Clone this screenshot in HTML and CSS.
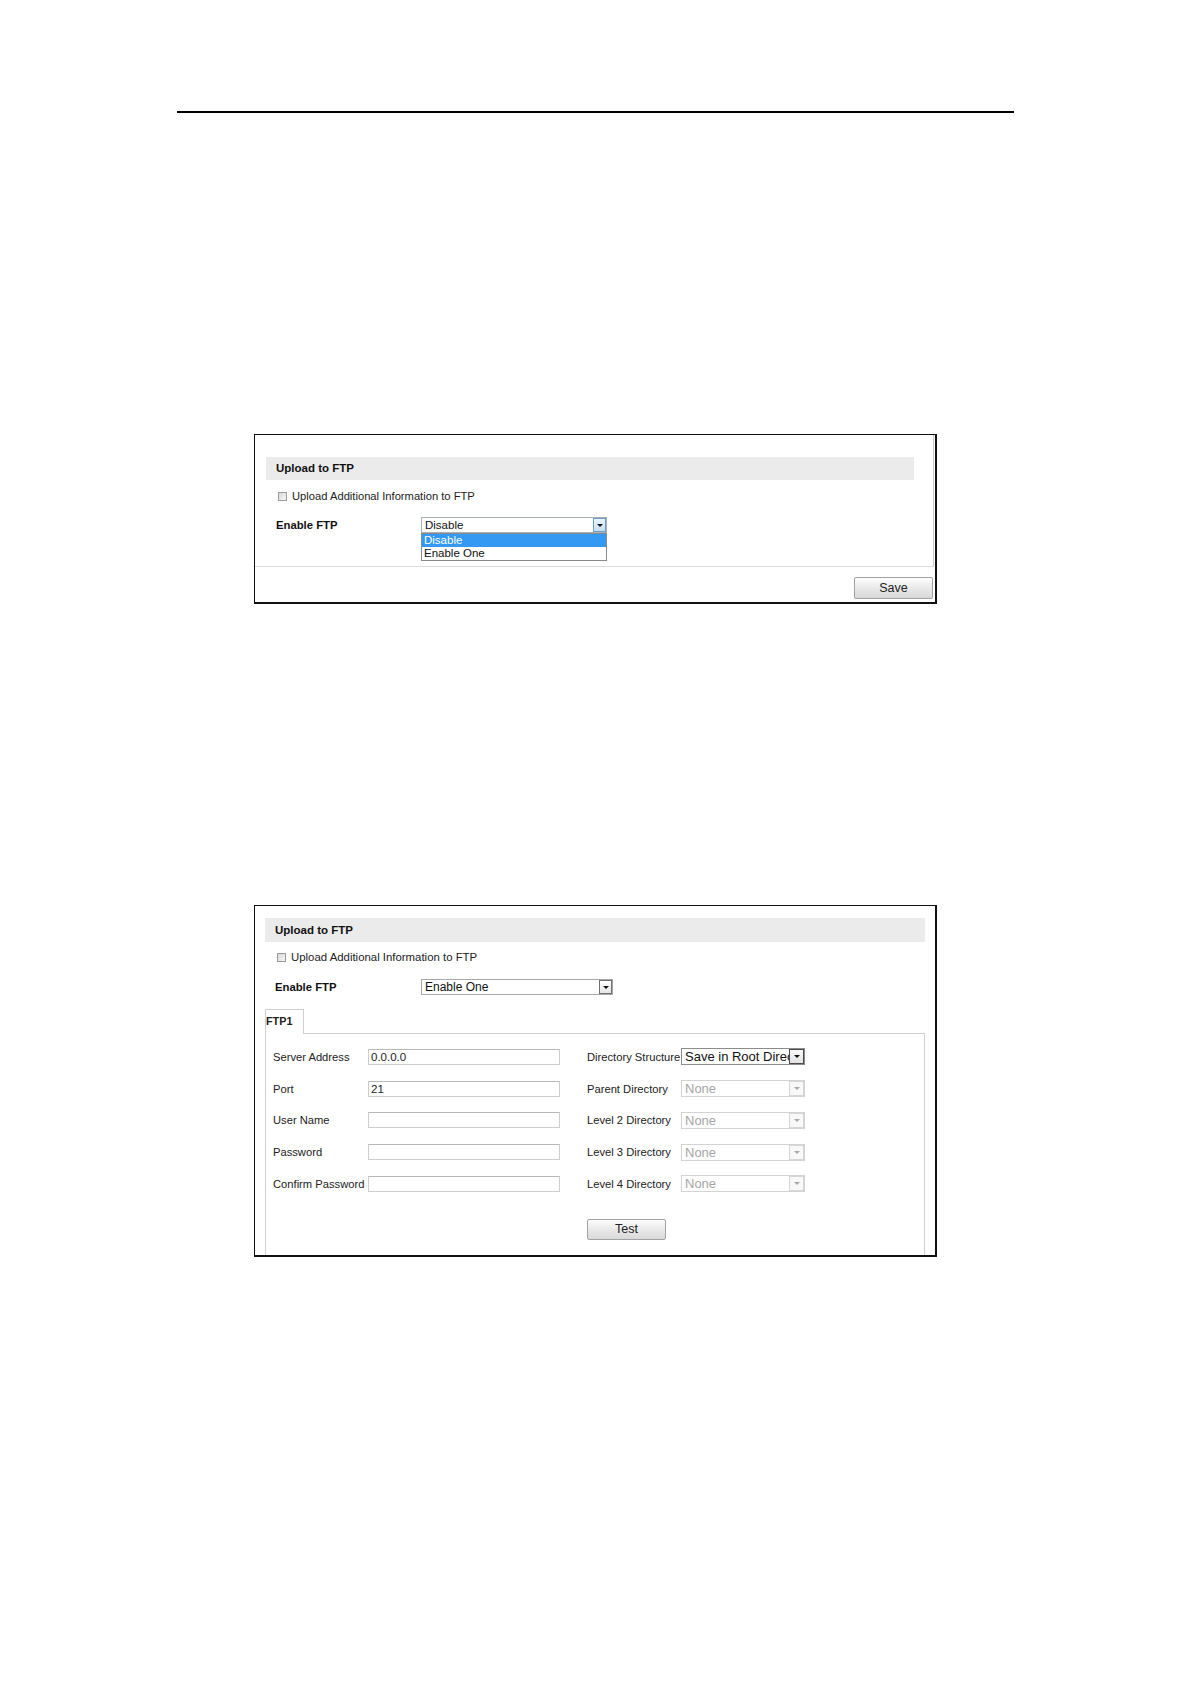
FILE: index.html
```html
<!DOCTYPE html>
<html>
  <head>
    <meta charset="UTF-8">
    <title>Upload to FTP</title>
    <link rel="stylesheet" href="styles.css">
  </head>
  <body>
    <div class="page">
      <div class="rule"></div>

      <!-- first screenshot: Enable FTP list open -->
      <div class="shot shot-one">
        <div class="panel">
          <div class="section-title">Upload to FTP</div>
          <div class="check-row"><span class="checkbox"></span>Upload Additional Information to FTP</div>
          <div class="field-row">
            <span class="field-label">Enable FTP</span>
            <div class="dropdown">
              <div class="select select-main">
                <span class="select-text">Disable</span>
                <span class="arrow arrow-hover"></span>
              </div>
              <ul class="options">
                <li class="selected">Disable</li>
                <li>Enable One</li>
              </ul>
            </div>
          </div>
        </div>
        <div class="footer">
          <button class="btn btn-save">Save</button>
        </div>
      </div>

      <!-- second screenshot: Enable One with FTP1 tab -->
      <div class="shot shot-two">
        <div class="section-title">Upload to FTP</div>
        <div class="check-row"><span class="checkbox"></span>Upload Additional Information to FTP</div>
        <div class="field-row">
          <span class="field-label label-wide">Enable FTP</span>
          <div class="select select-main select-wide">
            <span class="select-text">Enable One</span>
            <span class="arrow"></span>
          </div>
        </div>

        <div class="tab">FTP1</div>
        <div class="tab-frame">
          <div class="ftp-grid">
            <span class="label">Server Address</span>
            <div class="input">0.0.0.0</div>
            <span class="label">Directory Structure</span>
            <div class="select select-dir">
              <span class="select-text">Save in Root Direc</span>
              <span class="arrow arrow-dark"></span>
            </div>

            <span class="label">Port</span>
            <div class="input">21</div>
            <span class="label">Parent Directory</span>
            <div class="select select-dir disabled">
              <span class="select-text">None</span>
              <span class="arrow"></span>
            </div>

            <span class="label">User Name</span>
            <div class="input"></div>
            <span class="label">Level 2 Directory</span>
            <div class="select select-dir disabled">
              <span class="select-text">None</span>
              <span class="arrow"></span>
            </div>

            <span class="label">Password</span>
            <div class="input"></div>
            <span class="label">Level 3 Directory</span>
            <div class="select select-dir disabled">
              <span class="select-text">None</span>
              <span class="arrow"></span>
            </div>

            <span class="label">Confirm Password</span>
            <div class="input"></div>
            <span class="label">Level 4 Directory</span>
            <div class="select select-dir disabled">
              <span class="select-text">None</span>
              <span class="arrow"></span>
            </div>

            <div class="test-cell">
              <button class="btn btn-test">Test</button>
            </div>
          </div>
        </div>
      </div>
    </div>
  </body>
</html>
```

FILE: styles.css
```css
body {
  margin: 0;
  background-color: #fff;
  font-family: "Liberation Sans", Arial, sans-serif;
  color: #111;
}
.page {
  padding-top: 111px;
  height: 1573px;
}
.rule {
  margin-left: 177px;
  width: 837px;
  height: 2px;
  background-color: #000;
}

/* screenshot frames */
.shot {
  box-sizing: border-box;
  margin-left: 254px;
  width: 683px;
  border: 1px solid #111;
  border-right-width: 2px;
  border-bottom-width: 2px;
  background-color: #fff;
}
.shot-one {
  margin-top: 321px;
  height: 170px;
}
.shot-two {
  margin-top: 301px;
  height: 352px;
  padding-left: 10px;
  padding-top: 12px;
  display: flex;
  flex-direction: column;
}
.panel {
  box-sizing: border-box;
  width: 679px;
  height: 132px;
  border-right: 1px solid #c9c9c9;
  border-bottom: 1px solid #dcdcdc;
  padding-top: 22px;
  padding-left: 11px;
  position: relative;
}
.footer {
  display: flex;
  justify-content: flex-end;
  padding-top: 10px;
  padding-right: 2px;
}

/* section header */
.section-title {
  width: 638px;
  height: 23px;
  line-height: 23px;
  padding-left: 10px;
  background-color: #ebebeb;
  font-size: 11.5px;
  font-weight: bold;
  color: #111;
}
.shot-two .section-title {
  width: 650px;
  height: 24px;
  line-height: 24px;
}

.check-row {
  display: flex;
  align-items: center;
  height: 16px;
  margin-top: 8px;
  padding-left: 12px;
  font-size: 11.2px;
  color: #222;
}
.shot-two .check-row {
  margin-top: 7px;
  font-size: 11.4px;
}
.checkbox {
  box-sizing: border-box;
  width: 9px;
  height: 9px;
  margin-right: 5px;
  border: 1px solid #9a9a9a;
  background: linear-gradient(135deg, #d9d9d9, #f6f6f6);
}

.field-row {
  display: flex;
  align-items: center;
  height: 16px;
  margin-top: 12.5px;
  padding-left: 10px;
}
.shot-two .field-row {
  margin-top: 14px;
}
.field-label {
  width: 145px;
  font-size: 11.3px;
  font-weight: bold;
  color: #111;
}
.label-wide {
  width: 146px;
}

/* selects */
.dropdown {
  position: relative;
}
.select {
  box-sizing: border-box;
  position: relative;
  height: 16px;
  border: 1px solid #a9b0b8;
  background-color: #fff;
  overflow: hidden;
}
.select-main {
  width: 186px;
}
.select-wide {
  width: 192px;
  border-color: #a8a8a8;
}
.select-text {
  display: block;
  padding-left: 3px;
  line-height: 14px;
  font-size: 11.5px;
  white-space: nowrap;
  color: #111;
}
.select-wide .select-text {
  font-size: 12px;
}
.arrow {
  box-sizing: border-box;
  position: absolute;
  top: 0;
  right: 0;
  width: 13px;
  height: 14px;
  border: 1px solid #707070;
  background: linear-gradient(#ffffff, #e6e6e6);
}
.arrow::after {
  content: "";
  position: absolute;
  left: 3px;
  top: 5px;
  border-left: 3px solid transparent;
  border-right: 3px solid transparent;
  border-top: 3px solid #111;
}
.arrow-hover {
  border-color: #6e9cc9;
  background: linear-gradient(#e9f3fc, #c9dff4);
}
.arrow-dark {
  border-color: #4a4a4a;
  background: linear-gradient(#fafafa, #e2e2e2);
}

.options {
  position: absolute;
  left: 0;
  top: 16px;
  box-sizing: border-box;
  width: 186px;
  margin: 0;
  padding: 0;
  list-style: none;
  border: 1px solid #8a8a8a;
  background-color: #fff;
  font-size: 11.5px;
}
.options li {
  height: 13px;
  line-height: 13px;
  padding-left: 2px;
  color: #111;
}
.options li.selected {
  background-color: #3399f3;
  color: #fff;
}

/* tab area */
.tab {
  box-sizing: border-box;
  width: 39px;
  height: 25px;
  margin-top: 14px;
  margin-bottom: -1px;
  padding-top: 5px;
  border: 1px solid #cfcfcf;
  border-bottom: none;
  background-color: #fff;
  font-size: 10.8px;
  font-weight: bold;
  color: #222;
  position: relative;
  z-index: 1;
}
.tab-frame {
  box-sizing: border-box;
  width: 660px;
  flex: 1;
  border: 1px solid #cfcfcf;
  border-bottom: none;
  padding-top: 7px;
  padding-left: 7px;
}
.ftp-grid {
  display: grid;
  grid-template-columns: 95px 219px 94px 124px;
  grid-auto-rows: 31.75px;
  align-items: center;
}
.label {
  font-size: 11.2px;
  color: #222;
  white-space: nowrap;
}
.input {
  box-sizing: border-box;
  width: 192px;
  height: 16px;
  border: 1px solid #cdcdcd;
  border-top-color: #b9b9b9;
  padding-left: 2px;
  font-size: 11.5px;
  line-height: 14px;
  color: #222;
}
.select-dir {
  width: 124px;
  height: 17px;
  border-color: #8c8c8c;
}
.select-dir .select-text {
  font-size: 13px;
  line-height: 15px;
  padding-left: 3px;
}
.select-dir .arrow {
  width: 15px;
  height: 15px;
}
.select-dir .arrow::after {
  left: 4px;
  top: 5px;
}
.select.disabled {
  border-color: #d3d3d3;
}
.disabled .select-text {
  color: #a5a5a5;
}
.disabled .arrow {
  border-color: #d6d6d6;
  background: #f8f8f8;
}
.disabled .arrow::after {
  border-top-color: #a8a8a8;
}

.test-cell {
  grid-column: 3 / span 2;
  align-self: start;
  padding-top: 19px;
}

/* buttons */
.btn {
  box-sizing: border-box;
  height: 21px;
  padding: 0;
  border: 1px solid #a2a2a2;
  border-radius: 2px;
  background: linear-gradient(#fdfdfd, #e9e9e9 50%, #d9d9d9);
  font-family: "Liberation Sans", Arial, sans-serif;
  font-size: 12.5px;
  color: #222;
}
.btn-save {
  width: 79px;
  height: 22px;
}
.btn-test {
  width: 79px;
}
```
